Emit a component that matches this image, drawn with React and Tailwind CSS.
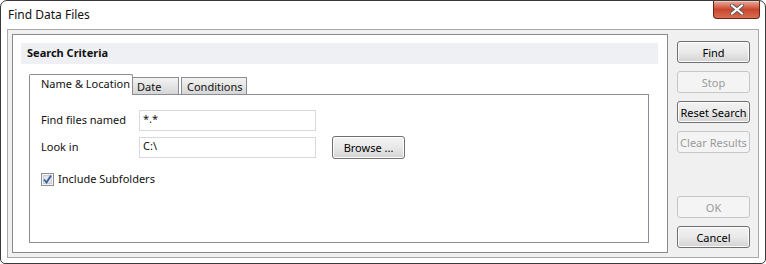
import React from "react";

const font = { fontFamily: '"Noto Sans", "Open Sans", sans-serif' };

function CloseButton() {
  return (
    <div className="w-[47px] h-[18px] rounded-b-[4px] border border-t-0 border-[#6d2418] bg-gradient-to-b from-[#e9a99a] via-[#c9452e] to-[#d86d52] flex items-center justify-center shadow-[inset_0_1px_0_rgba(255,255,255,0.4)]">
      <svg width="14" height="11" viewBox="0 0 14 11">
        <path d="M2 1.5 L12 9.5 M12 1.5 L2 9.5" stroke="#5a5a5a" strokeWidth="4" strokeLinecap="square" />
        <path d="M2 1.5 L12 9.5 M12 1.5 L2 9.5" stroke="#ffffff" strokeWidth="2" strokeLinecap="square" />
      </svg>
    </div>
  );
}

function Btn({ children, disabled, className = "" }) {
  return (
    <div
      className={
        "h-[22px] w-[73px] rounded-[3px] border flex items-center justify-center text-[11px] leading-none whitespace-nowrap " +
        (disabled
          ? "border-[#c4c6c8] bg-[#f4f4f4] text-[#9a9a9a] "
          : "border-[#707070] bg-gradient-to-b from-[#f3f3f3] via-[#e9e9e9] to-[#d3d3d3] text-black shadow-[inset_0_0_0_1px_#fcfcfc] ") +
        className
      }
    >
      {children}
    </div>
  );
}

function Field({ value }) {
  return (
    <div className="w-[177px] h-[21px] border border-[#d6d9dd] bg-white pl-[3px] text-[11px] leading-[16px]">
      {value}
    </div>
  );
}

function App() {
  return (
    <div className="w-[766px] h-[264px] bg-white text-[#111]" style={font}>
      <div className="w-full h-full border border-[#3a3a3a] rounded-t-[7px] rounded-b-[5px] bg-white flex flex-col">
        {/* title bar */}
        <div className="h-[28px] flex items-start justify-between">
          <div className="pl-[7px] pt-[6px] text-[12px] leading-[16px]">Find Data Files</div>
          <div className="mr-[5px]">
            <CloseButton />
          </div>
        </div>

        {/* client */}
        <div className="mx-[6px] h-[229px] border border-[#a9a9a9] bg-[#f0f0f0] flex pt-[4px] pl-[4px] pb-[4px]">
          {/* panel */}
          <div className="w-[656px] h-full border border-[#8a8a8a] bg-white flex flex-col pt-[8px] pl-[8px] pr-[9px]">
            <div className="h-[21px] bg-[#eef0f3] flex items-center pl-[6px] text-[11px] font-bold">
              Search Criteria
            </div>

            <div className="pl-[8px] pr-[9px] pt-[10px] flex flex-col">
              {/* tabs */}
              <div className="flex items-end h-[20px] whitespace-nowrap">
                <div className="h-[21px] w-[104px] border border-b-0 border-[#898c95] bg-white rounded-t-[2px] pl-[11px] text-[11px] leading-[18px] -mb-px relative z-10">
                  Name &amp; Location
                </div>
                <div className="h-[17px] w-[46px] border border-l-0 border-b-0 border-[#898c95] bg-gradient-to-b from-[#f3f3f3] to-[#d6d6d6] pl-[4px] text-[11px] leading-[17px]">
                  Date
                </div>
                <div className="h-[17px] w-[66px] ml-[2px] border border-b-0 border-[#898c95] bg-gradient-to-b from-[#f3f3f3] to-[#d6d6d6] pl-[5px] text-[11px] leading-[17px]">
                  Conditions
                </div>
              </div>
              <div className="h-[149px] w-[620px] border border-[#898c95] bg-white pl-[11px] pt-[15px] flex flex-col whitespace-nowrap">
                <div className="flex items-center h-[21px]">
                  <div className="w-[98px] text-[11px]">Find files named</div>
                  <Field value="*.*" />
                </div>
                <div className="flex items-center h-[22px] mt-[5px]">
                  <div className="w-[98px] text-[11px]">Look in</div>
                  <Field value="C:\" />
                  <Btn className="ml-[16px] !w-[73px] !h-[23px]">Browse ...</Btn>
                </div>
                <div className="flex items-center mt-[14px] h-[14px]">
                  <svg width="13" height="13" viewBox="0 0 13 13">
                    <rect x="0.5" y="0.5" width="12" height="12" fill="#f4f4f4" stroke="#8e8f8f" />
                    <rect x="2.5" y="2.5" width="8" height="8" fill="#dfe3ea" stroke="#c9ced6" />
                    <path d="M3 6.5 L5.5 9.5 L10 2.5" fill="none" stroke="#3b5d9e" strokeWidth="1.8" />
                  </svg>
                  <div className="ml-[4px] text-[11px]">Include Subfolders</div>
                </div>
              </div>
            </div>
          </div>

          {/* buttons */}
          <div className="flex flex-col pl-[9px] pt-[7px]">
            <Btn>Find</Btn>
            <Btn disabled className="mt-[8px]">Stop</Btn>
            <Btn className="mt-[8px]">Reset Search</Btn>
            <Btn disabled className="mt-[8px]">Clear Results</Btn>
            <Btn disabled className="mt-[43px]">OK</Btn>
            <Btn className="mt-[8px]">Cancel</Btn>
          </div>
        </div>
      </div>
    </div>
  );
}

export default App;
